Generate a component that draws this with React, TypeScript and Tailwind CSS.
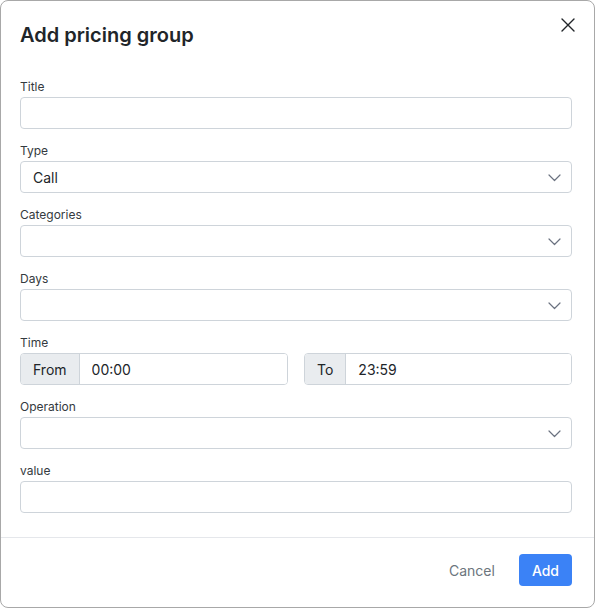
import React, { FC } from "react";

const font = { fontFamily: "Inter, 'Noto Sans', sans-serif" };

const Chevron: FC = () => (
  <svg width="13" height="8" viewBox="0 0 13 8" fill="none" className="absolute right-[10px] top-[12px]">
    <path d="M1 1l5.5 5.5L12 1" stroke="#6b7280" strokeWidth="1.2" strokeLinecap="round" strokeLinejoin="round" />
  </svg>
);

const Label: FC<{ text: string }> = ({ text }) => (
  <label className="block text-[12px] leading-[16px] mb-[2px] text-[#343a40]">{text}</label>
);

const TextField: FC<{ label: string }> = ({ label }) => (
  <div className="mb-[14px]">
    <Label text={label} />
    <input className="block w-full h-8 px-3 rounded-[4px] border border-[#ced4da] bg-white text-[14px] text-[#212529] outline-none" />
  </div>
);

const SelectField: FC<{ label: string; value?: string }> = ({ label, value = "" }) => (
  <div className="mb-[14px]">
    <Label text={label} />
    <div className="relative h-8 rounded-[4px] border border-[#ced4da] bg-white px-3 flex items-center text-[14px] text-[#212529]">
      {value}
      <Chevron />
    </div>
  </div>
);

const AddonInput: FC<{ addon: string; value: string }> = ({ addon, value }) => (
  <div className="flex h-8 rounded-[4px] border border-[#ced4da] overflow-hidden">
    <span className="flex items-center px-3 bg-[#e9ecef] border-r border-[#ced4da] text-[14px] text-[#212529]">
      {addon}
    </span>
    <input
      defaultValue={value}
      className="flex-1 min-w-0 px-3 text-[14px] text-[#212529] outline-none bg-white"
    />
  </div>
);

const App: FC = () => {
  return (
    <div
      style={font}
      className="w-[595px] h-[608px] bg-white border border-[#a8a8a8] rounded-[8px] flex flex-col overflow-hidden"
    >
      <div className="flex justify-between items-start pl-[19px] pr-[19px] pt-[20px]">
        <h2 className="text-[20px] leading-[28px] font-semibold text-[#212529]">Add pricing group</h2>
        <button className="mt-[-3px] p-0 text-[#212529]">
          <svg width="14" height="14" viewBox="0 0 14 14" fill="none">
            <path d="M1 1l12 12M13 1L1 13" stroke="#212529" strokeWidth="1.4" strokeLinecap="round" />
          </svg>
        </button>
      </div>

      <div className="pl-[19px] pr-[22px] pt-[30px] pb-[10px]">
        <TextField label="Title" />
        <SelectField label="Type" value="Call" />
        <SelectField label="Categories" />
        <SelectField label="Days" />
        <div className="mb-[14px]">
          <Label text="Time" />
          <div className="grid grid-cols-2 gap-4">
            <AddonInput addon="From" value="00:00" />
            <AddonInput addon="To" value="23:59" />
          </div>
        </div>
        <SelectField label="Operation" />
        <TextField label="value" />
      </div>

      <div className="border-t border-[#e5e7eb] h-[65px] flex items-center justify-end gap-3 px-[22px]">
        <button className="px-3 h-8 text-[14px] text-[#6c757d]">Cancel</button>
        <button className="px-[13px] h-8 rounded-[4px] bg-[#3b82f6] text-white text-[14px] font-medium">
          Add
        </button>
      </div>
    </div>
  );
};

export default App;
